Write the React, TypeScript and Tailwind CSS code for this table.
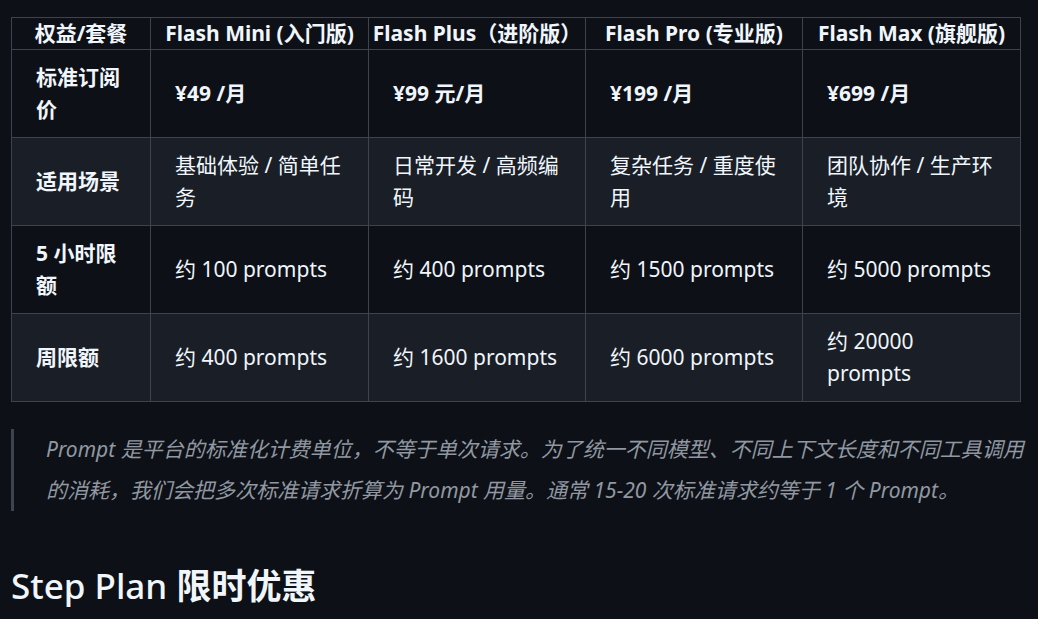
import React from 'react';

const font = { fontFamily: '"Noto Sans", "Noto Sans CJK SC", sans-serif' };

const heads = ['权益/套餐', 'Flash Mini (入门版)', 'Flash Plus（进阶版）', 'Flash Pro (专业版)', 'Flash Max (旗舰版)'];

const rows: { label: string; cells: string[]; bold?: boolean }[] = [
  { label: '标准订阅价', cells: ['¥49 /月', '¥99 元/月', '¥199 /月', '¥699 /月'], bold: true },
  { label: '适用场景', cells: ['基础体验 / 简单任务', '日常开发 / 高频编码', '复杂任务 / 重度使用', '团队协作 / 生产环境'] },
  { label: '5 小时限额', cells: ['约 100 prompts', '约 400 prompts', '约 1500 prompts', '约 5000 prompts'] },
  { label: '周限额', cells: ['约 400 prompts', '约 1600 prompts', '约 6000 prompts', '约 20000 prompts'] },
];

export default function App() {
  return (
    <div className="min-h-[619px] w-full bg-[#0d1117] text-[#f0f6fc] px-[11px] pt-[17px] overflow-hidden" style={font}>
      <table className="table-fixed border-collapse w-[1010px] text-[21px]">
        <colgroup>
          <col className="w-[139px]" />
          <col className="w-[218px]" />
          <col className="w-[217px]" />
          <col className="w-[217px]" />
          <col className="w-[218px]" />
        </colgroup>
        <thead>
          <tr>
            {heads.map((h) => (
              <th key={h} className="border border-[#3d444d] px-0 py-[3px] leading-[25px] font-bold text-center whitespace-nowrap">
                {h}
              </th>
            ))}
          </tr>
        </thead>
        <tbody>
          {rows.map((r, i) => (
            <tr key={r.label} className={i % 2 === 1 ? 'bg-[#1a1f27]' : 'bg-[#0d1117]'}>
              <td className="border border-[#3d444d] px-6 pt-[11px] pb-3 leading-8 font-bold align-middle">{r.label}</td>
              {r.cells.map((c) => (
                <td key={c} className={`border border-[#3d444d] px-6 pt-[11px] pb-3 leading-8 align-middle ${r.bold ? 'font-bold' : ''}`}>
                  {c}
                </td>
              ))}
            </tr>
          ))}
        </tbody>
      </table>

      <blockquote className="mt-[27px] border-l-[3px] border-[#3d444d] pl-8 w-[1022px] text-[#9198a1] italic text-[21px] leading-[41px]">
        Prompt 是平台的标准化计费单位，不等于单次请求。为了统一不同模型、不同上下文长度和不同工具调用的消耗，我们会把多次标准请求折算为 Prompt 用量。通常 15-20 次标准请求约等于 1 个 Prompt。
      </blockquote>

      <h2 className="mt-[52px] text-[35px] leading-[45px] text-[#f0f6fc]">
        <span className="font-medium">Step Plan </span>
        <span className="font-bold">限时优惠</span>
      </h2>
    </div>
  );
}
